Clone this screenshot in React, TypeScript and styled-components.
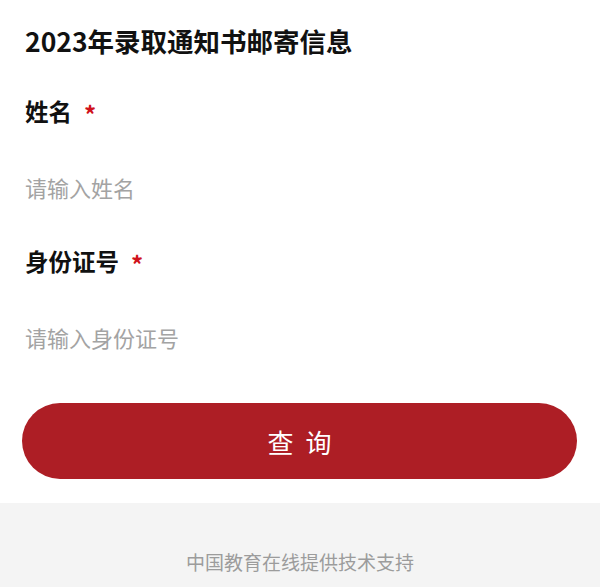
import styled, { createGlobalStyle } from 'styled-components';

const GlobalStyle = createGlobalStyle`
  html, body {
    margin: 0;
    padding: 0;
    background: #ffffff;
    font-family: "Noto Sans CJK SC", "Noto Sans", sans-serif;
  }
`;

const Page = styled.div`
  width: 600px;
  min-height: 587px;
  display: flex;
  flex-direction: column;
  background: #ffffff;
  overflow: hidden;
`;

const Form = styled.div`
  display: flex;
  flex-direction: column;
  padding: 23px 24px 0 25px;
`;

const Title = styled.h1`
  margin: 0;
  font-size: 26.5px;
  line-height: 36px;
  font-weight: 700;
  color: #111111;
`;

const Field = styled.div<{ $first?: boolean }>`
  display: flex;
  flex-direction: column;
  margin-top: ${(p) => (p.$first ? '32px' : '16px')};
`;

const Label = styled.label`
  display: flex;
  align-items: center;
  gap: 12px;
  height: 40px;
  font-size: 23.5px;
  font-weight: 700;
  color: #111111;
`;

const Required = styled.span`
  color: #d0121b;
  font-size: 24px;
  line-height: 1;
  position: relative;
  top: 3px;
`;

const Input = styled.input`
  height: 76px;
  margin-top: 18px;
  padding: 0;
  border: none;
  outline: none;
  background: transparent;
  font-family: inherit;
  font-size: 22px;
  color: #111111;

  &::placeholder {
    color: #a3a3a3;
  }
`;

const SubmitButton = styled.button`
  margin: 28px -1px 0 -3px;
  height: 76px;
  border: none;
  border-radius: 38px;
  background: #ad1e25;
  color: #ffffff;
  font-family: inherit;
  font-size: 26px;
  letter-spacing: 3px;
  text-indent: 3px;
  cursor: pointer;
`;

const Footer = styled.footer`
  margin-top: 24px;
  flex: 1;
  min-height: 84px;
  background: #f4f4f4;
  display: flex;
  justify-content: center;
  padding-top: 45px;
  box-sizing: border-box;
`;

const FooterText = styled.span`
  font-size: 19px;
  line-height: 28px;
  color: #9c9c9c;
`;

export default function App() {
  return (
    <Page>
      <GlobalStyle />
      <Form>
        <Title>2023年录取通知书邮寄信息</Title>
        <Field $first>
          <Label>
            姓名 <Required>*</Required>
          </Label>
          <Input placeholder="请输入姓名" />
        </Field>
        <Field>
          <Label>
            身份证号 <Required>*</Required>
          </Label>
          <Input placeholder="请输入身份证号" />
        </Field>
        <SubmitButton>查 询</SubmitButton>
      </Form>
      <Footer>
        <FooterText>中国教育在线提供技术支持</FooterText>
      </Footer>
    </Page>
  );
}
